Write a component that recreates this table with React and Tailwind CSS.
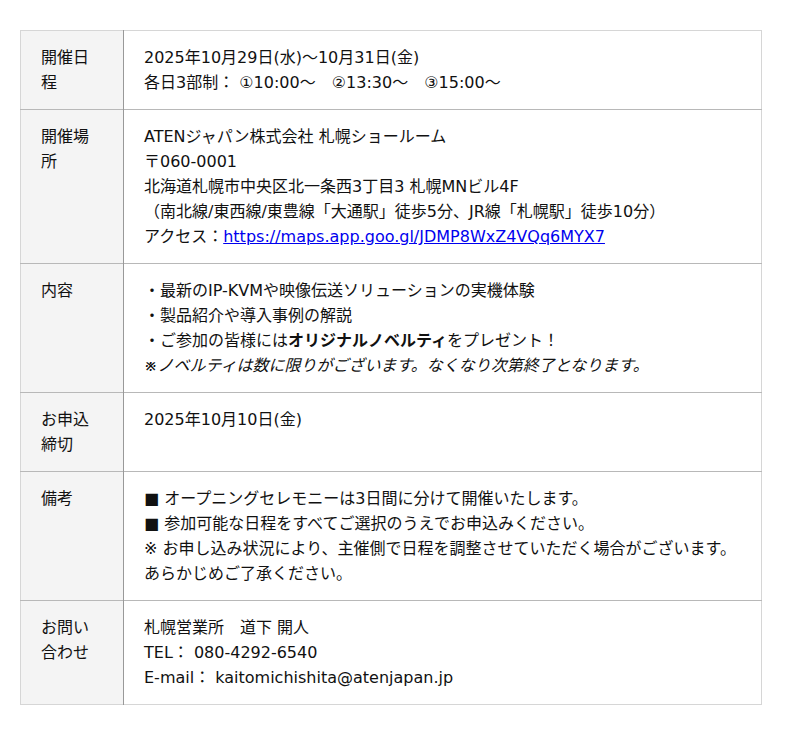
const rows = [
  {
    label: '開催日程',
    body: (
      <>
        <p>2025年10月29日(水)〜10月31日(金)</p>
        <p>各日3部制： ①10:00〜　②13:30〜　③15:00〜</p>
      </>
    ),
  },
  {
    label: '開催場所',
    body: (
      <>
        <p>ATENジャパン株式会社 札幌ショールーム</p>
        <p>〒060-0001</p>
        <p>北海道札幌市中央区北一条西3丁目3 札幌MNビル4F</p>
        <p>（南北線/東西線/東豊線「大通駅」徒歩5分、JR線「札幌駅」徒歩10分）</p>
        <p>
          アクセス：
          <a href="#" className="text-[#0000ee] underline">
            https://maps.app.goo.gl/JDMP8WxZ4VQq6MYX7
          </a>
        </p>
      </>
    ),
  },
  {
    label: '内容',
    body: (
      <>
        <p>・最新のIP-KVMや映像伝送ソリューションの実機体験</p>
        <p>・製品紹介や導入事例の解説</p>
        <p>
          ・ご参加の皆様には<strong className="font-bold">オリジナルノベルティ</strong>をプレゼント！
        </p>
        <p className="italic">※ノベルティは数に限りがございます。なくなり次第終了となります。</p>
      </>
    ),
  },
  {
    label: 'お申込締切',
    body: <p>2025年10月10日(金)</p>,
  },
  {
    label: '備考',
    body: (
      <>
        <p>■ オープニングセレモニーは3日間に分けて開催いたします。</p>
        <p>■ 参加可能な日程をすべてご選択のうえでお申込みください。</p>
        <p>※ お申し込み状況により、主催側で日程を調整させていただく場合がございます。</p>
        <p>あらかじめご了承ください。</p>
      </>
    ),
  },
  {
    label: 'お問い合わせ',
    body: (
      <>
        <p>札幌営業所　道下 開人</p>
        <p>TEL： 080-4292-6540</p>
        <p>E-mail： kaitomichishita@atenjapan.jp</p>
      </>
    ),
  },
];

export default function App() {
  return (
    <div
      className="min-h-screen bg-white pt-[30px] pl-5 text-[16px] leading-[25px] text-[#111]"
      style={{ fontFamily: '"DejaVu Sans", "Noto Sans CJK JP", sans-serif' }}
    >
      <table className="w-[742px] border-collapse border border-[#d6d6d6]">
        <tbody>
          {rows.map((row, i) => (
            <tr key={i} className={i < rows.length - 1 ? 'border-b border-[#b8b8b8]' : ''}>
              <th className="w-[103px] bg-[#f4f4f4] border-r border-[#999] px-5 pt-[14px] pb-[14px] text-left align-top font-normal">
                {row.label}
              </th>
              <td className="px-5 pt-[14px] pb-[14px] align-top">{row.body}</td>
            </tr>
          ))}
        </tbody>
      </table>
    </div>
  );
}
